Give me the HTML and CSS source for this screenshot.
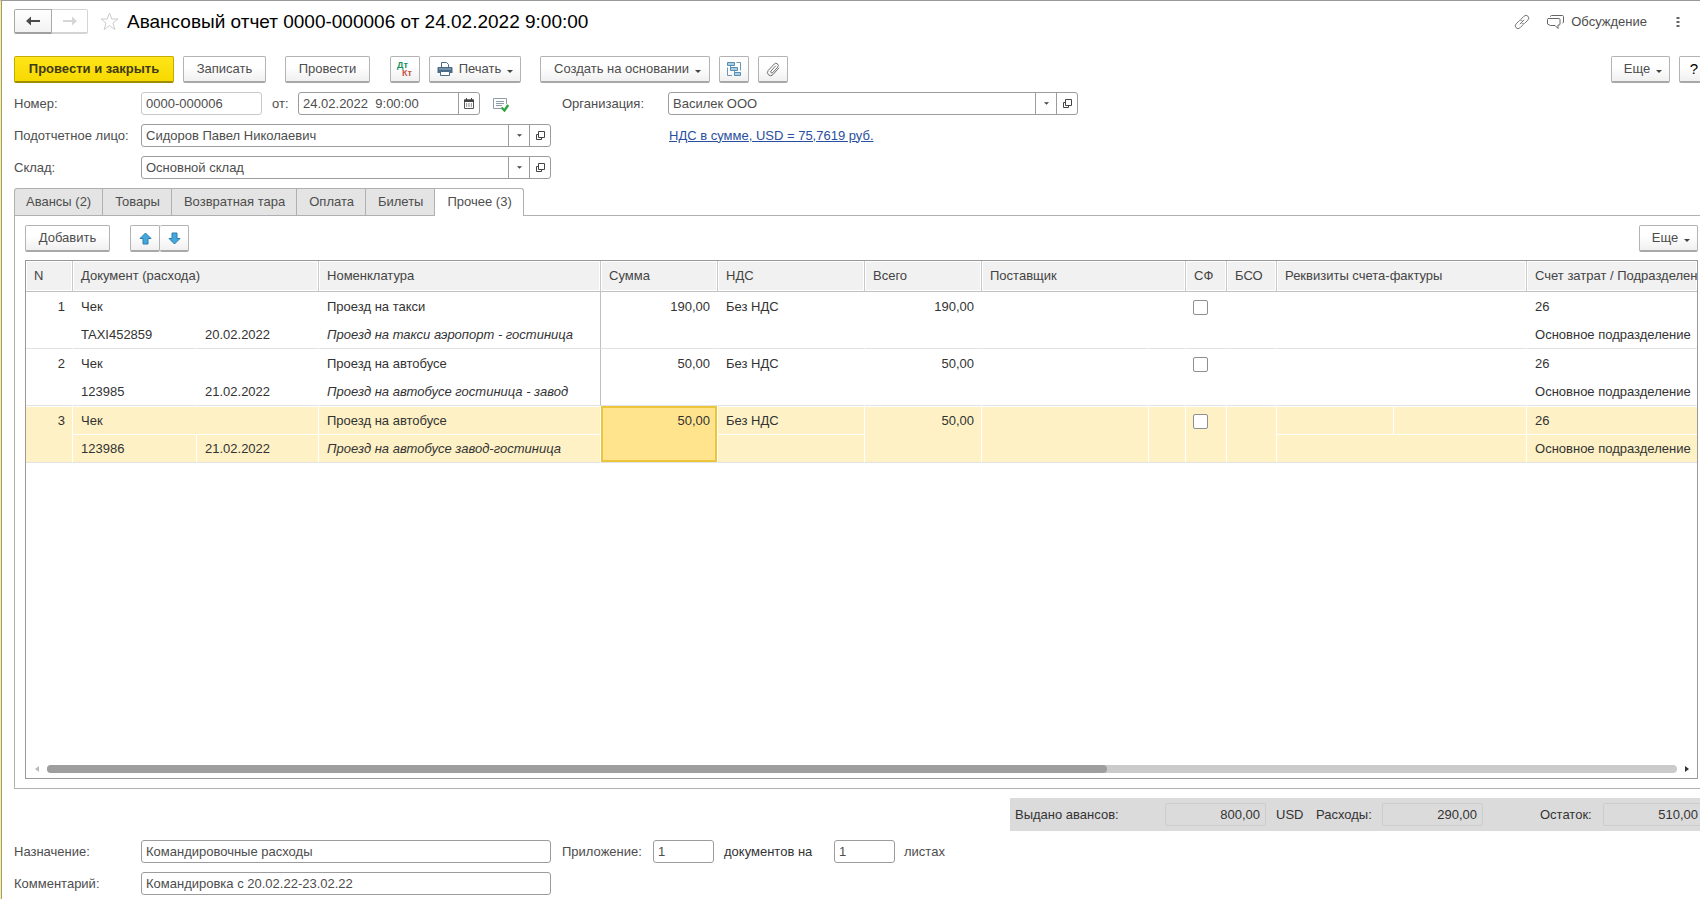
FILE: index.html
```html
<!DOCTYPE html>
<html lang="ru">
<head>
<meta charset="utf-8">
<title>Авансовый отчет 0000-000006</title>
<link rel="stylesheet" href="styles.css">
</head>
<body>
<svg class="defs" aria-hidden="true">
  <symbol id="i-open" viewBox="0 0 11 11"><path d="M3.500 1.500h6v6h-6zM3.500 4.500H1.500v5h5V7.500" fill="none" stroke="#444"/></symbol>
  <symbol id="i-caret" viewBox="0 0 6 3"><path d="M0 0h6L3 3z" fill="#444"/></symbol>
</svg>
<main class="window">
  <header class="title-bar">
    <div class="history">
      <button type="button" class="nav" aria-label="Назад"><svg width="14" height="10" viewBox="0 0 14 10"><path d="M0 5l5-4.500v3.500h9v2H5v3.500z" fill="#4a4a4a"/></svg></button>
      <button type="button" class="nav nav-off" aria-label="Вперед"><svg width="14" height="10" viewBox="0 0 14 10"><path d="M14 5L9 .5V4H0v2h9v3.500z" fill="#d6d6d6"/></svg></button>
    </div>
    <button type="button" class="bare star" aria-label="В избранное"><svg width="19" height="19" viewBox="0 0 19 19"><path d="M9.500 1l2.300 6h6.200l-5 4 1.900 6.500-5.400-3.900-5.400 3.900L6 11 1 7h6.200z" fill="none" stroke="#ccc"/></svg></button>
    <h1>Авансовый отчет 0000-000006 от 24.02.2022 9:00:00</h1>
    <div class="title-tools">
      <button type="button" class="bare" aria-label="Ссылка"><svg width="18" height="16" viewBox="0 0 16 16" fill="none" stroke="#777" stroke-width="1" stroke-linecap="round"><path d="M7 5.200l3-3a2.700 2.700 0 0 1 3.900 3.900l-3 3c-.8.8-1.900.9-2.800.5M9 10.800l-3 3A2.700 2.700 0 0 1 2.100 9.900l3-3c.8-.8 1.900-.9 2.800-.5M6 10l4-4"/></svg></button>
      <button type="button" class="bare discuss"><svg width="19" height="16" viewBox="0 0 19 16" fill="none" stroke="#666"><path d="M2 4.500h11a1 1 0 0 1 1 1V10a1 1 0 0 1-1 1h-1v3.500L9 11.500H4.500L1.500 10V5.500a1 1 0 0 1 .5-1zM4.500 3V2.500c0-.6.4-1 1-1h11c.6 0 1 .4 1 1V8c0 .6-.4 1-1 1"/></svg><span>Обсуждение</span></button>
      <button type="button" class="bare" aria-label="Меню"><svg width="4" height="12" viewBox="0 0 4 12" fill="#666"><path d="M.5 1h3v2h-3zM.5 5h3v2h-3zM.5 9h3v2h-3z"/></svg></button>
    </div>
  </header>

  <div class="toolbar">
    <button type="button" class="btn primary">Провести и закрыть</button>
    <button type="button" class="btn w-save">Записать</button>
    <button type="button" class="btn w-post">Провести</button>
    <button type="button" class="btn icon-btn dtkt" aria-label="Проводки"><svg width="18" height="20" viewBox="0 0 18 20"><text x="1" y="9" class="dt">Дт</text><text x="6" y="17" class="kt">Кт</text></svg></button>
    <button type="button" class="btn menu-btn print"><svg width="16" height="16" viewBox="0 0 16 16"><path d="M4.500 6V1.500h5l2 2V6" fill="#fff" stroke="#4a6a86"/><path d="M1.500 6h13a1 1 0 0 1 1 1v5h-15V7a1 1 0 0 1 1-1z" fill="#4a6a86"/><path d="M2 8h12" stroke="#9db6ca"/><path d="M3.500 10.500h9v4h-9z" fill="#fff" stroke="#4a6a86"/></svg><span>Печать</span><svg class="caret"><use href="#i-caret"/></svg></button>
    <button type="button" class="btn menu-btn create"><span>Создать на основании</span><svg class="caret"><use href="#i-caret"/></svg></button>
    <button type="button" class="btn icon-btn" aria-label="Структура подчиненности"><svg width="16" height="16" viewBox="0 0 16 16"><path d="M10.500 1.500h4v8M1.500 6.500v8H6M4.500 4.500v3.500H5M8.500 9.500V13" fill="none" stroke="#6f97b3"/><path d="M1.500 1.500h7v3h-7zM4.500 6.500h7v3h-7zM8.500 11.500h6v3h-6z" fill="#a9cde4" stroke="#5b8db0"/></svg></button>
    <button type="button" class="btn icon-btn" aria-label="Файлы"><svg width="16" height="16" viewBox="0 0 16 16"><path d="M10.500 5l-4.500 5a1.200 1.200 0 0 0 1.800 1.600l4.900-5.500a2.300 2.300 0 0 0-3.500-3L3.300 9.400a3.100 3.100 0 0 0 4.700 4.200l5.800-6.600" fill="none" stroke="#707070" stroke-linecap="round"/></svg></button>
    <button type="button" class="btn menu-btn more push"><span>Еще</span><svg class="caret"><use href="#i-caret"/></svg></button>
    <button type="button" class="btn help">?</button>
  </div>

  <section class="form">
    <div class="row">
      <label class="lbl" for="num">Номер:</label>
      <input id="num" class="field num" value="0000-000006" readonly>
      <label class="lbl-from" for="date">от:</label>
      <div class="combo date"><input id="date" value="24.02.2022  9:00:00"><button type="button" aria-label="Календарь"><svg width="10" height="11" viewBox="0 0 10 11"><path d="M.5 2h9v8.500h-9z" fill="none" stroke="#555"/><path d="M0 1.500h10V4H0zM2 0h1v2H2zM7 0h1v2H7z" fill="#444"/><path d="M2 6h6M2 8h6" stroke="#444" stroke-dasharray="1.200 1.200"/></svg></button></div>
      <svg class="posted" width="16" height="15" viewBox="0 0 16 15"><path d="M13.500 7V1.500H.5v10H8" fill="none" stroke="#8d9dab"/><path d="M3 4.500h8M3 6.500h8M3 8.500h6" stroke="#8d9dab"/><path d="M8.500 10.500l3 3L15.200 8" fill="none" stroke="#32a542" stroke-width="2.400"/></svg>
      <label class="lbl-org" for="org">Организация:</label>
      <div class="combo wide"><input id="org" value="Василек ООО"><button type="button" aria-label="Выбрать"><svg class="caret"><use href="#i-caret"/></svg></button><button type="button" aria-label="Открыть"><svg class="open"><use href="#i-open"/></svg></button></div>
    </div>
    <div class="row">
      <label class="lbl" for="person">Подотчетное лицо:</label>
      <div class="combo wide"><input id="person" value="Сидоров Павел Николаевич"><button type="button" aria-label="Выбрать"><svg class="caret"><use href="#i-caret"/></svg></button><button type="button" aria-label="Открыть"><svg class="open"><use href="#i-open"/></svg></button></div>
      <a class="vat" href="#">НДС в сумме, USD = 75,7619 руб.</a>
    </div>
    <div class="row">
      <label class="lbl" for="store">Склад:</label>
      <div class="combo wide"><input id="store" value="Основной склад"><button type="button" aria-label="Выбрать"><svg class="caret"><use href="#i-caret"/></svg></button><button type="button" aria-label="Открыть"><svg class="open"><use href="#i-open"/></svg></button></div>
    </div>
  </section>

  <nav class="tabs" role="tablist">
    <button type="button" role="tab">Авансы (2)</button>
    <button type="button" role="tab">Товары</button>
    <button type="button" role="tab">Возвратная тара</button>
    <button type="button" role="tab">Оплата</button>
    <button type="button" role="tab">Билеты</button>
    <button type="button" role="tab" class="active" aria-selected="true">Прочее (3)</button>
  </nav>

  <section class="panel">
    <div class="panel-bar">
      <button type="button" class="btn w-add">Добавить</button>
      <div class="movers">
        <button type="button" class="btn" aria-label="Вверх"><svg width="13" height="13" viewBox="0 0 13 13"><path d="M6.500 1L12 6.500H9V12H4V6.500H1z" fill="#44a8dc" stroke="#2b7fb0"/></svg></button>
        <button type="button" class="btn" aria-label="Вниз"><svg width="13" height="13" viewBox="0 0 13 13"><path d="M6.500 12L1 6.500h3V1h5v5.500h3z" fill="#44a8dc" stroke="#2b7fb0"/></svg></button>
      </div>
      <button type="button" class="btn menu-btn more push"><span>Еще</span><svg class="caret"><use href="#i-caret"/></svg></button>
    </div>
    <div class="grid-box">
      <table class="grid">
        <colgroup><col class="c-n"><col class="c-doc"><col class="c-date"><col class="c-item"><col class="c-sum"><col class="c-vat"><col class="c-total"><col class="c-sup"><col class="c-sup2"><col class="c-sf"><col class="c-bso"><col class="c-req"><col class="c-req2"><col></colgroup>
        <thead>
          <tr><th>N</th><th colspan="2">Документ (расхода)</th><th>Номенклатура</th><th>Сумма</th><th>НДС</th><th>Всего</th><th colspan="2">Поставщик</th><th>СФ</th><th>БСО</th><th colspan="2">Реквизиты счета-фактуры</th><th>Счет затрат / Подразделение</th></tr>
        </thead>
        <tbody>
          <tr><td rowspan="2" class="r">1</td><td colspan="2">Чек</td><td class="fix">Проезд на такси</td><td rowspan="2" class="r">190,00</td><td>Без НДС</td><td rowspan="2" class="r">190,00</td><td rowspan="2"></td><td rowspan="2"></td><td rowspan="2"><input type="checkbox" aria-label="СФ, строка 1"></td><td rowspan="2"></td><td></td><td></td><td>26</td></tr>
          <tr><td>TAXI452859</td><td>20.02.2022</td><td class="note fix">Проезд на такси аэропорт - гостиница</td><td></td><td colspan="2"></td><td>Основное подразделение</td></tr>
        </tbody>
        <tbody>
          <tr><td rowspan="2" class="r">2</td><td colspan="2">Чек</td><td class="fix">Проезд на автобусе</td><td rowspan="2" class="r">50,00</td><td>Без НДС</td><td rowspan="2" class="r">50,00</td><td rowspan="2"></td><td rowspan="2"></td><td rowspan="2"><input type="checkbox" aria-label="СФ, строка 2"></td><td rowspan="2"></td><td></td><td></td><td>26</td></tr>
          <tr><td>123985</td><td>21.02.2022</td><td class="note fix">Проезд на автобусе гостиница - завод</td><td></td><td colspan="2"></td><td>Основное подразделение</td></tr>
        </tbody>
        <tbody class="selected">
          <tr><td rowspan="2" class="r">3</td><td colspan="2">Чек</td><td>Проезд на автобусе</td><td rowspan="2" class="r current">50,00</td><td>Без НДС</td><td rowspan="2" class="r">50,00</td><td rowspan="2"></td><td rowspan="2"></td><td rowspan="2"><input type="checkbox" aria-label="СФ, строка 3"></td><td rowspan="2"></td><td></td><td></td><td>26</td></tr>
          <tr><td>123986</td><td>21.02.2022</td><td class="note">Проезд на автобусе завод-гостиница</td><td></td><td colspan="2"></td><td>Основное подразделение</td></tr>
        </tbody>
      </table>
      <div class="scroll">
        <svg width="4" height="8" viewBox="0 0 4 8"><path d="M4 1v6L0 4z" fill="#bbb"/></svg>
        <div class="track"><div class="thumb"></div></div>
        <svg width="4" height="8" viewBox="0 0 4 8"><path d="M0 1v6l4-3z" fill="#333"/></svg>
      </div>
    </div>
  </section>

  <section class="totals">
    <label class="t-adv" for="t1">Выдано авансов:</label><input id="t1" value="800,00" readonly>
    <span class="t-cur">USD</span>
    <label class="t-exp" for="t2">Расходы:</label><input id="t2" value="290,00" readonly>
    <label class="t-rest" for="t3">Остаток:</label><input id="t3" value="510,00" readonly>
  </section>

  <footer class="form">
    <div class="row">
      <label class="lbl" for="goal">Назначение:</label>
      <input id="goal" class="field text" value="Командировочные расходы">
      <label class="lbl-att" for="docs">Приложение:</label>
      <input id="docs" class="field small" value="1">
      <label class="lbl-docs" for="sheets">документов на</label>
      <input id="sheets" class="field small" value="1">
      <span class="lbl-end">листах</span>
    </div>
    <div class="row">
      <label class="lbl" for="comment">Комментарий:</label>
      <input id="comment" class="field text" value="Командировка с 20.02.22-23.02.22">
    </div>
  </footer>
</main>
</body>
</html>
```
FILE: styles.css
```css
* { box-sizing: border-box; }

body {
  margin: 0;
  overflow: hidden;
  background: #fff;
  color: #4d4d4d;
  font: 13px/16px "Liberation Sans", Arial, sans-serif;
}

button, input {
  font: inherit;
  color: inherit;
  margin: 0;
  border-radius: 0;
}

button { padding: 0; }
svg { flex: none; }
.defs { display: none; }

.window {
  display: flex;
  flex-direction: column;
  min-height: 100vh;
  padding-left: 12px;
  padding-bottom: 4px;
  border-top: 1px solid #999;
  border-left: 1px solid #f3eda6;
  box-shadow: inset 1px 0 #a39c6b;
}

/* Title */
.title-bar {
  display: flex;
  align-items: center;
  height: 41px;
  padding-left: 1px;
}
.history { display: flex; }
.nav {
  display: grid;
  place-items: center;
  width: 38px;
  height: 25px;
  border: 1px solid #a8a8a8;
  border-bottom: 2px solid #a0a0a0;
  border-radius: 2px 0 0 2px;
  background: linear-gradient(#fff, #f2f2f2);
}
.nav-off {
  width: 36px;
  border-color: #d4d4d4;
  border-left: 0;
  border-radius: 0 2px 2px 0;
  background: #fff;
}
.bare {
  display: flex;
  align-items: center;
  gap: 6px;
  border: 0;
  background: none;
}
.star { margin: 0 8px 0 12px; }
h1 {
  margin: 0;
  color: #000;
  font-size: 19px;
  line-height: 24px;
  font-weight: 400;
  white-space: nowrap;
}
.title-tools {
  display: flex;
  align-items: center;
  gap: 15px;
  margin-left: auto;
  padding-right: 20px;
}
.discuss { margin-right: 14px; }

/* Buttons */
.toolbar {
  display: flex;
  align-items: center;
  margin: 14px -9px 0 1px;
}
.btn {
  flex: none;
  display: flex;
  align-items: center;
  justify-content: center;
  height: 27px;
  border: 1px solid #b3b3b3;
  border-bottom: 2px solid #a8a8a8;
  border-radius: 2px;
  background: linear-gradient(#fff 40%, #f0f0f0);
  white-space: nowrap;
}
.caret { width: 6px; height: 3px; }
.open { width: 11px; height: 11px; }
.primary {
  width: 160px;
  border-color: #c4ac00 #c4ac00 #a08c00;
  background: linear-gradient(#ffe51a, #f7d900);
  color: #3f3a14;
  font-weight: 700;
}
.w-save { width: 83px; margin-left: 9px; }
.w-post { width: 85px; margin-left: 19px; }
.w-add { width: 85px; }
.icon-btn { width: 30px; margin-left: 9px; }
.dtkt { margin-left: 20px; }
.dt, .kt { font-size: 9px; font-weight: 700; }
.dt { fill: #16915a; }
.kt { fill: #c8504b; }
.menu-btn { gap: 6px; padding: 0 7px 0 12px; }
.menu-btn .caret { margin-top: 4px; }
.print { width: 92px; margin-left: 9px; padding-left: 7px; }
.create { width: 170px; margin-left: 19px; }
.more { width: 59px; }
.push { margin-left: auto; }
.help { width: 30px; margin-left: 9px; color: #000; font-size: 15px; }

/* Form rows */
.form {
  display: flex;
  flex-direction: column;
  gap: 9px;
  margin-top: 9px;
  padding-left: 1px;
}
.row { display: flex; align-items: center; }
.lbl { width: 127px; }
.field, .combo {
  height: 23px;
  border: 1px solid #9c9c9c;
  border-radius: 3px;
  background: #fff;
}
.field { padding: 0 4px; }
.num { width: 121px; border-color: #c8c8c8; }
.lbl-from { width: 36px; padding-left: 10px; }
.combo { display: flex; overflow: hidden; }
.combo input {
  flex: 1;
  min-width: 0;
  padding: 0 4px;
  border: 0;
  background: none;
  white-space: pre;
}
.combo button {
  display: grid;
  place-items: center;
  width: 21px;
  border: 0;
  border-left: 1px solid #9c9c9c;
  background: none;
}
.combo .caret { width: 5px; }
.date { width: 182px; }
.wide { width: 410px; }
.posted { margin: 2px 53px 0 13px; }
.lbl-org { width: 106px; }
.vat { margin-left: 118px; color: #2a4f9e; }
.text { width: 410px; }
.lbl-att { width: 102px; padding-left: 11px; }
.small { width: 61px; }
.lbl-docs { width: 120px; padding-left: 10px; color: #333; }
.lbl-end { padding-left: 9px; }

/* Tabs */
.tabs {
  display: flex;
  margin-top: 9px;
  padding-left: 1px;
}
.tabs button {
  height: 27px;
  padding: 0 11px 0 12px;
  border: 1px solid #b0b0b0;
  border-left: 0;
  border-bottom: 0;
  background: #e4e4e4;
}
.tabs button:first-child {
  padding-left: 11px;
  border-left: 1px solid #b0b0b0;
  border-radius: 3px 0 0 0;
}
.tabs .active {
  z-index: 1;
  height: 28px;
  margin-bottom: -1px;
  padding-bottom: 2px;
  border-radius: 0 3px 0 0;
  background: #fff;
}

/* Table */
.panel {
  flex: 1;
  display: flex;
  flex-direction: column;
  margin-left: 1px;
  padding: 9px 2px 9px 10px;
  border: 1px solid #b0b0b0;
  border-right: 0;
}
.panel-bar { display: flex; padding-bottom: 8px; }
.movers { display: flex; margin-left: 20px; }
.movers .btn { width: 30px; }
.movers .btn + .btn { width: 29px; border-left: 0; }
.grid-box {
  flex: 1;
  display: flex;
  flex-direction: column;
  border: 1px solid #999;
  overflow: hidden;
}
.grid {
  width: 100%;
  table-layout: fixed;
  border-collapse: separate;
  border-spacing: 0;
  color: #333;
}
.c-n { width: 47px; }
.c-doc { width: 124px; }
.c-date { width: 122px; }
.c-item { width: 282px; }
.c-sum, .c-total { width: 117px; }
.c-vat { width: 147px; }
.c-sup { width: 167px; }
.c-sup2 { width: 37px; }
.c-sf { width: 41px; }
.c-bso { width: 50px; }
.c-req { width: 117px; }
.c-req2 { width: 133px; }
.grid th {
  height: 31px;
  padding: 0 0 0 8px;
  border-right: 1px solid #c9c9c9;
  border-bottom: 1px solid #c0c0c0;
  background: #f1f1f1;
  box-shadow: inset 0 0 0 1px #fff;
  color: #444;
  font-weight: 400;
  text-align: left;
  white-space: nowrap;
  overflow: hidden;
}
.grid th:last-child { border-right: 0; }
.grid td {
  height: 28px;
  padding: 7px 0 4px 8px;
  vertical-align: top;
  white-space: nowrap;
  overflow: hidden;
  border-right: 1px solid transparent;
}
.grid tr:last-child td, .grid td[rowspan] {
  height: 29px;
  border-bottom: 1px solid #e2e2e2;
}
.grid .r { padding-right: 7px; text-align: right; }
.grid td.fix { border-right-color: #c0c0c0; }
.note { font-style: italic; }
.grid input {
  display: block;
  appearance: none;
  width: 15px;
  height: 15px;
  margin: 1px 0 0 -1px;
  border: 1px solid #8f8f8f;
  border-radius: 2px;
  background: #fff;
}
.selected td {
  background: #fdf1c5;
  border-right-color: #fff;
  box-shadow: inset 0 1px #fff;
}
.selected td:last-child { border-right: 0; }
.grid .selected .current {
  background: #ffe48d;
  box-shadow: inset 0 0 0 2px #ecc63a;
}
.scroll {
  display: flex;
  align-items: center;
  justify-content: space-between;
  gap: 8px;
  margin: auto 8px 5px 9px;
}
.track {
  flex: 1;
  height: 8px;
  border-radius: 4px;
  background: #cbcbcb;
}
.thumb {
  width: 65%;
  height: 8px;
  border-radius: 4px;
  background: #9e9e9e;
}

/* Totals */
.totals {
  display: flex;
  align-items: center;
  align-self: flex-end;
  height: 33px;
  margin: 9px -4px 0 0;
  padding-left: 5px;
  background: #dbdbdb;
  color: #333;
}
.totals input {
  width: 101px;
  height: 23px;
  padding: 0 5px;
  border: 1px solid #cdcdcd;
  border-radius: 2px;
  background: none;
  text-align: right;
}
.t-adv { width: 150px; }
.t-cur { width: 50px; padding-left: 10px; }
.t-exp { width: 66px; }
.t-rest { width: 120px; padding-left: 57px; }
```
